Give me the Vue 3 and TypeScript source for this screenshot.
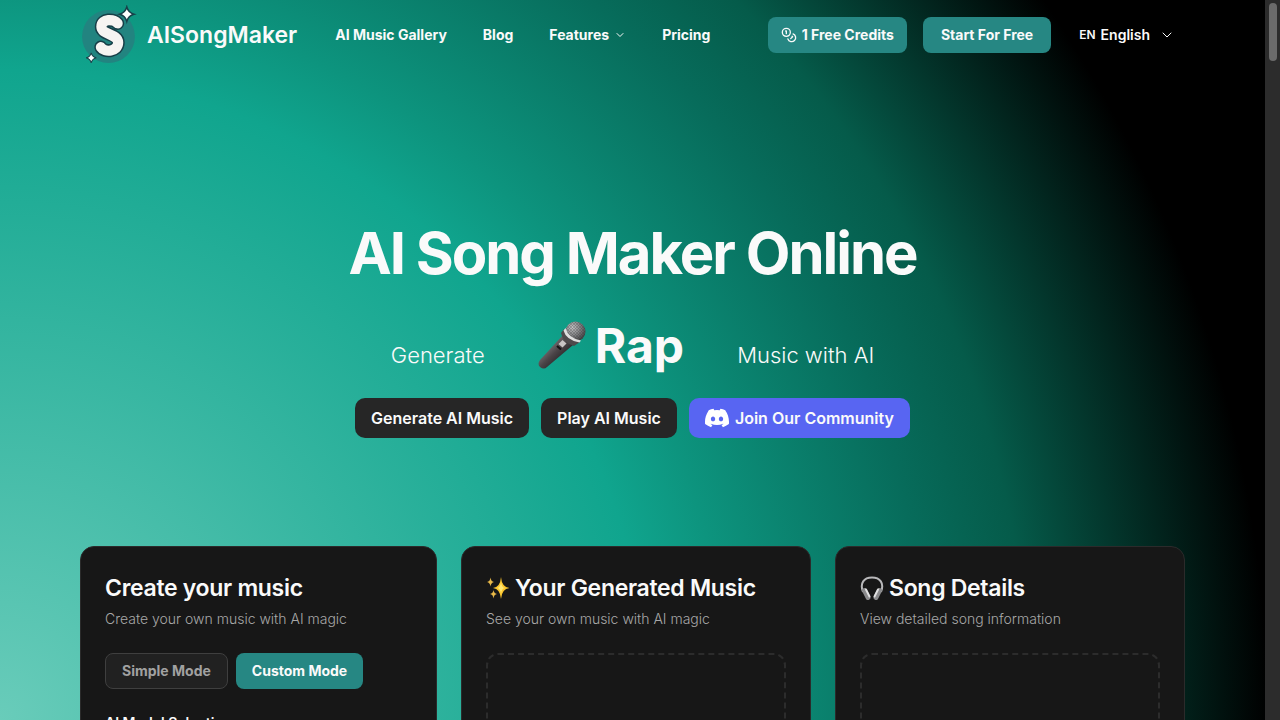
<script setup lang="ts">
const navLinks = [
  { label: 'AI Music Gallery', menu: false },
  { label: 'Blog', menu: false },
  { label: 'Features', menu: true },
  { label: 'Pricing', menu: false },
]
</script>

<template>
  <div class="page">
    <header class="bar">
      <a href="#" class="brand">
        <svg class="logo" viewBox="0 2 56 60" aria-hidden="true">
          <circle cx="28" cy="33" r="26" fill="#228480" />
          <path d="M37 20C33.500 16 21 14.500 21 23.500C21 31.500 37.500 30 37.500 39C37.500 48 24 49 20.500 43.500" fill="none" stroke="#173f48" stroke-width="13" stroke-linecap="round" stroke-linejoin="round" />
          <path d="M37 20C33.500 16 21 14.500 21 23.500C21 31.500 37.500 30 37.500 39C37.500 48 24 49 20.500 43.500" fill="none" stroke="#f6f4f2" stroke-width="10" stroke-linecap="round" stroke-linejoin="round" />
          <path d="M46 4Q47.500 9.500 53 11Q47.500 12.500 46 18Q44.500 12.500 39 11Q44.500 9.500 46 4Z" fill="#fff" stroke="#173f48" stroke-width="1.500" />
          <path d="M11 49Q12 53 16 54Q12 55 11 59Q10 55 6 54Q10 53 11 49Z" fill="#fff" stroke="#173f48" stroke-width="1" />
        </svg>
        <span>AISongMaker</span>
      </a>
      <nav class="nav" aria-label="Main">
        <template v-for="link in navLinks" :key="link.label">
          <button v-if="link.menu" type="button" class="nav-item">
            {{ link.label }}
            <svg class="chev-small" viewBox="0 0 24 24" aria-hidden="true"><path d="m6 9 6 6 6-6" /></svg>
          </button>
          <a v-else href="#" class="nav-item">{{ link.label }}</a>
        </template>
      </nav>
      <div class="actions">
        <button type="button" class="btn teal credits">
          <svg class="coins" viewBox="0 0 24 24" aria-hidden="true">
            <circle cx="8" cy="8" r="6" />
            <path d="M18.090 10.370A6 6 0 1 1 10.340 18M7 6h1v4M16.710 13.880l.7.710-2.820 2.820" />
          </svg>
          1 Free Credits
        </button>
        <button type="button" class="btn teal start">Start For Free</button>
        <button type="button" class="lang">
          <span class="code">EN</span>
          English
          <svg class="chev" viewBox="0 0 24 24" aria-hidden="true"><path d="m4 8 8 8 8-8" /></svg>
        </button>
      </div>
    </header>

    <section class="hero">
      <h1>AI Song Maker Online</h1>
      <p class="tagline">
        <span>Generate</span>
        <strong class="genre">
          <svg class="mic" viewBox="0 0 48 48" aria-hidden="true">
            <defs>
              <linearGradient id="body" x1="0" y1="0" x2="1" y2="1">
                <stop offset="0.300" stop-color="#777174" />
                <stop offset="0.500" stop-color="#4a4447" />
                <stop offset="0.750" stop-color="#252124" />
              </linearGradient>
              <radialGradient id="head" cx="0.350" cy="0.300" r="0.750">
                <stop offset="0" stop-color="#c2c2c4" />
                <stop offset="0.500" stop-color="#858588" />
                <stop offset="1" stop-color="#3c3c3e" />
              </radialGradient>
              <pattern id="mesh" width="3" height="3" patternUnits="userSpaceOnUse">
                <path d="M0 0l3 3M3 0L0 3" stroke="#333" stroke-width="0.500" opacity="0.500" />
              </pattern>
            </defs>
            <path d="M25 14L35 24L9 46Q6 49 2 46Q-1 43 2 39Z" fill="url(#body)" />
            <circle cx="37.500" cy="10.500" r="10" fill="url(#head)" />
            <circle cx="37.500" cy="10.500" r="10" fill="url(#mesh)" />
            <path d="M26 8Q28 18 42 21L36 25Q25 22 23 12Z" fill="#4e4a4c" />
            <path d="M27.500 7Q30 17 43 19.500L41.500 21.500Q28 19 25.500 9.500Z" fill="#dedede" />
            <path d="M24.500 19l4 3.500-4 4-4-3.500z" fill="#c8c4c4" />
            <path d="M19 25l4 3.500" stroke="#151315" stroke-width="2" />
          </svg>Rap
        </strong>
        <span>Music with AI</span>
      </p>
      <div class="cta">
        <a href="#" class="big">Generate AI Music</a>
        <a href="#" class="big">Play AI Music</a>
        <a href="#" class="big discord">
          <svg class="discord-mark" viewBox="0 0 24 24" aria-hidden="true">
            <path d="M20.317 4.370a19.791 19.791 0 0 0-4.885-1.515.074.074 0 0 0-.079.037c-.211.375-.445.865-.608 1.250a18.270 18.270 0 0 0-5.487 0 12.640 12.640 0 0 0-.617-1.250.077.077 0 0 0-.079-.037A19.736 19.736 0 0 0 3.677 4.370a.07.07 0 0 0-.032.027C.533 9.046-.320 13.580.099 18.058a.082.082 0 0 0 .031.056 19.900 19.900 0 0 0 5.993 3.030.078.078 0 0 0 .084-.028c.462-.630.874-1.295 1.226-1.994a.076.076 0 0 0-.041-.106 13.107 13.107 0 0 1-1.872-.892.077.077 0 0 1-.008-.128c.126-.094.252-.192.372-.291a.074.074 0 0 1 .078-.010c3.928 1.793 8.180 1.793 12.061 0a.074.074 0 0 1 .079.009c.120.099.246.198.373.292a.077.077 0 0 1-.006.127 12.299 12.299 0 0 1-1.873.892.077.077 0 0 0-.041.107c.360.698.772 1.362 1.225 1.993a.076.076 0 0 0 .084.028 19.839 19.839 0 0 0 6.002-3.030.077.077 0 0 0 .032-.054c.500-5.177-.838-9.674-3.549-13.660a.061.061 0 0 0-.031-.028zM8.020 15.331c-1.183 0-2.157-1.086-2.157-2.419s.956-2.419 2.157-2.419c1.210 0 2.176 1.095 2.157 2.419 0 1.333-.956 2.419-2.157 2.419zm7.975 0c-1.183 0-2.157-1.086-2.157-2.419s.955-2.419 2.157-2.419c1.210 0 2.176 1.095 2.157 2.419 0 1.333-.946 2.419-2.157 2.419z" />
          </svg>
          Join Our Community
        </a>
      </div>
    </section>

    <main class="cards">
      <section class="card">
        <h2>Create your music</h2>
        <p class="sub">Create your own music with AI magic</p>
        <div class="modes">
          <button type="button" class="btn outline">Simple Mode</button>
          <button type="button" class="btn teal">Custom Mode</button>
        </div>
        <h3>AI Model Selection</h3>
      </section>
      <section class="card">
        <h2>
          <svg class="emoji" viewBox="0 0 24 24" aria-hidden="true">
            <path d="M15 1Q15.800 11.200 23.500 12Q15.800 12.800 15 23Q14.200 12.800 7 12Q14.200 11.200 15 1Z" fill="#fbc52d" />
            <path d="M15 6Q15.500 11.500 19 12Q15.500 12.500 15 18Q14.500 12.500 11 12Q14.500 11.500 15 6Z" fill="#ffe873" />
            <path d="M4.500 1.500Q5 5.500 8 6Q5 6.500 4.500 10.500Q4 6.500 1 6Q4 5.500 4.500 1.500ZM7.500 14Q8 17.600 11 18Q8 18.400 7.500 22.500Q7 18.400 4 18Q7 17.600 7.500 14Z" fill="#e9b949" />
          </svg>
          Your Generated Music
        </h2>
        <p class="sub">See your own music with AI magic</p>
        <div class="drop"></div>
      </section>
      <section class="card">
        <h2>
          <svg class="emoji" viewBox="0 0 24 24" aria-hidden="true">
            <path d="M3 16C-.5 7 4 1.500 12 1.500S24.500 7 21 16" fill="none" stroke="#b9b9bb" stroke-width="2" />
            <path d="M4.500 14.500L8 21.500M19.500 14.500L16 21.500" stroke="#8a8a8c" stroke-width="5" stroke-linecap="round" />
            <path d="M6 13.500L9.500 20.500M18 13.500L14.500 20.500" stroke="#e0e0e1" stroke-width="2" stroke-linecap="round" />
          </svg>
          Song Details
        </h2>
        <p class="sub">View detailed song information</p>
        <div class="drop"></div>
      </section>
    </main>

    <div class="track" aria-hidden="true"><div class="thumb"></div></div>
  </div>
</template>

<style>
body {
  margin: 0;
  background: #000;
}
</style>

<style scoped>
.page {
  position: relative;
  box-sizing: border-box;
  height: 100vh;
  overflow: hidden;
  padding-right: 15px;
  font-family: Inter, "Liberation Sans", sans-serif;
  color: #fafafa;
  background: radial-gradient(
    circle at 0 100%,
    #69ccba 0,
    #10a58e 650px,
    #0d947e 730px,
    #076c5b 930px,
    #055b4a 1030px,
    #000 1268px
  );
}
a {
  color: inherit;
  text-decoration: none;
}
button {
  font: inherit;
  color: inherit;
  background: none;
  border: 0;
  padding: 0;
  cursor: pointer;
}
svg {
  flex: none;
}
.bar {
  display: flex;
  align-items: center;
  height: 70px;
  padding: 0 80px;
  font-size: 14px;
  font-weight: 700;
  line-height: 20px;
}
.brand {
  display: flex;
  align-items: center;
  gap: 10px;
  font-size: 23px;
  font-weight: 600;
}
.logo {
  width: 57px;
  height: 61px;
}
.nav {
  display: flex;
  gap: 36px;
  margin-left: 38px;
}
.nav-item {
  display: flex;
  align-items: center;
  gap: 5px;
}
.chev-small,
.chev,
.coins {
  fill: none;
  stroke: currentColor;
  stroke-width: 2;
  stroke-linecap: round;
  stroke-linejoin: round;
}
.chev-small {
  width: 12px;
  height: 12px;
}
.chev {
  width: 12px;
  height: 12px;
  margin-left: 6px;
}
.coins {
  width: 16px;
  height: 16px;
}
.actions {
  display: flex;
  align-items: center;
  gap: 16px;
  margin-left: auto;
}
.btn {
  display: flex;
  align-items: center;
  justify-content: center;
  box-sizing: border-box;
  height: 36px;
  padding: 0 16px;
  border-radius: 8px;
  font-size: 14px;
  font-weight: 700;
  line-height: 20px;
}
.teal {
  background: #268783;
}
.credits {
  gap: 5px;
  padding: 0 13px;
}
.start {
  padding: 0 18px;
}
.lang {
  display: flex;
  align-items: center;
  gap: 5px;
  padding: 0 12px;
  font-weight: 600;
}
.code {
  font-size: 12px;
}
.hero {
  display: flex;
  flex-direction: column;
  align-items: center;
  padding: 147px 0 108px;
}
h1 {
  margin: 0;
  font-size: 58px;
  line-height: 72px;
  font-weight: 700;
  letter-spacing: -2px;
}
.tagline {
  display: flex;
  align-items: baseline;
  gap: 53px;
  margin: 32px 0 28px;
  font-size: 22px;
  line-height: 28px;
  font-weight: 300;
}
.genre {
  font-size: 48px;
  line-height: 48px;
  font-weight: 700;
}
.mic {
  width: 48px;
  height: 48px;
  margin-right: 9px;
  vertical-align: -6px;
}
.cta {
  display: flex;
  gap: 12px;
}
.big {
  display: flex;
  align-items: center;
  gap: 6px;
  height: 40px;
  padding: 0 16px;
  border-radius: 10px;
  background: #262626;
  font-size: 16px;
  line-height: 24px;
  font-weight: 600;
}
.discord {
  background: #5865f2;
}
.discord-mark {
  width: 24px;
  height: 24px;
  fill: #fff;
}
.cards {
  display: grid;
  grid-template-columns: 357fr 350fr 350fr;
  gap: 24px;
  padding: 0 80px;
}
.card {
  box-sizing: border-box;
  min-width: 0;
  min-height: 400px;
  padding: 24px;
  border: 1px solid #2b2b2b;
  border-radius: 14px;
  background: #171717;
}
h2 {
  display: flex;
  align-items: center;
  gap: 5px;
  margin: 0;
  font-size: 23px;
  line-height: 34px;
  font-weight: 600;
  letter-spacing: -0.3px;
}
.emoji {
  width: 24px;
  height: 24px;
}
.sub {
  margin: 4px 0 24px;
  font-size: 14px;
  line-height: 20px;
  font-weight: 300;
  color: #a8a8a8;
}
.modes {
  display: flex;
  gap: 8px;
}
.outline {
  border: 1px solid #3f3f3f;
  background: #212121;
  color: #a1a1a1;
}
h3 {
  margin: 24px 0 0;
  font-size: 14px;
  line-height: 20px;
  font-weight: 600;
}
.drop {
  box-sizing: border-box;
  height: 300px;
  border: 2px dashed #2c2c2c;
  border-radius: 12px;
}
.track {
  position: absolute;
  top: 0;
  right: 0;
  bottom: 0;
  width: 15px;
  box-sizing: border-box;
  padding: 3px;
  background: #2c2c2c;
}
.thumb {
  width: 8px;
  height: 58px;
  margin-left: 1px;
  border-radius: 4px;
  background: #6b6b6b;
}
</style>
